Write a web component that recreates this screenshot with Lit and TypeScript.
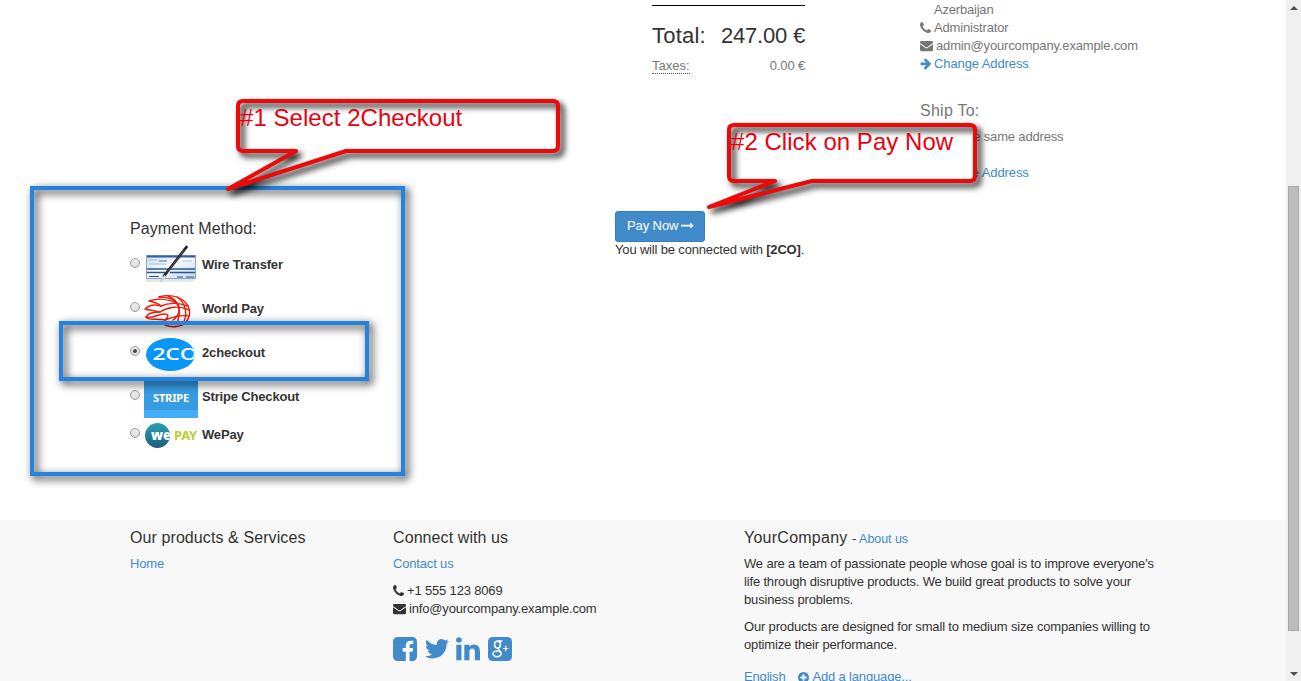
import { LitElement, html, css, svg } from "lit";
import { customElement, property } from "lit/decorators.js";

const ICONS: Record<string, { box: string; w: number; d: string }> = {
  phone: { box: "192 128 1408 1536", w: 11, d: "M1600 1240q0 27-10 70.5t-21 68.5q-21 50-122 106-94 51-186 51-27 0-53-3.5t-57.5-12.5-47-14.5-55.5-20.5-49-18q-98-35-175-83-127-79-264-216t-216-264q-48-77-83-175-3-9-18-49t-20.5-55.5-14.5-47-12.5-57.5-3.5-53q0-92 51-186 56-101 106-122 25-11 68.5-21t70.5-10q14 0 21 3 18 6 53 76 11 19 30 54t35 63.5 31 53.5q3 4 17.5 25t21.5 35.5 7 28.5q0 20-28.5 50t-62 55-62 53-28.5 46q0 9 5 22.5t8.5 20.5 14 24 11.5 19q76 137 174 235t235 174q2 1 19 11.5t24 14 20.5 8.5 22.5 5q18 0 46-28.5t53-62 55-62 50-28.5q14 0 28.5 7t35.5 21.5 25 17.5q25 15 53.5 31t63.5 35 54 30q70 35 76 53 3 7 3 21z" },
  envelope: { box: "0 128 1792 1536", w: 13, d: "M1792 710v794q0 66-47 113t-113 47h-1472q-66 0-113-47t-47-113v-794q44 49 101 87 362 246 497 345 57 42 92.5 65.5t94.5 48 110 24.5h2q51 0 110-24.5t94.5-48 92.5-65.5q170-123 498-345 57-39 100-87zm0-294q0 79-49 151t-122 123q-376 261-468 325-10 7-42.5 31t-54 38.5-52 32.5-57.5 27-50 9h-2q-23 0-50-9t-57.5-27-52-32.5-54-38.5-42.5-31q-91-64-262-182.5t-205-142.5q-62-42-117-115.5t-55-136.5q0-78 41.5-130t118.5-52h1472q65 0 112.5 47t47.5 113z" },
  arrow: { box: "64 128 1536 1664", w: 11, d: "M1600 960q0 54-37 91l-651 651q-39 37-91 37-51 0-90-37l-75-75q-38-38-38-91t38-91l293-293h-704q-52 0-84.5-37.5t-32.5-90.5v-128q0-53 32.5-90.5t84.5-37.5h704l-293-294q-38-36-38-90t38-90l75-75q38-38 90-38 53 0 91 38l651 651q37 35 37 90z" },
  longArrow: { box: "0 128 1792 1536", w: 13, d: "M1728 893q0 14-10 24l-384 354q-16 14-35 6-19-9-19-29v-224h-1248q-14 0-23-9t-9-23v-192q0-14 9-23t23-9h1248v-224q0-21 19-29t35 5l384 350q10 10 10 23z" },
  plus: { box: "128 128 1536 1536", w: 11, d: "M1344 960v-128q0-26-19-45t-45-19h-256v-256q0-26-19-45t-45-19h-128q-26 0-45 19t-19 45v256h-256q-26 0-45 19t-19 45v128q0 26 19 45t45 19h256v256q0 26 19 45t45 19h128q26 0 45-19t19-45v-256h256q26 0 45-19t19-45zm320-64q0 209-103 385.5t-279.5 279.5-385.5 103-385.5-103-279.5-279.5-103-385.5 103-385.5 279.5-279.5 385.5-103 385.5 103 279.5 279.5 103 385.5z" },
  facebook: { box: "128 128 1536 1536", w: 24, d: "M1376 128q119 0 203.5 84.5t84.5 203.5v960q0 119-84.5 203.5t-203.5 84.5h-188v-595h199l30-232h-229v-148q0-56 23.5-84t91.5-28l122-1v-207q-63-9-178-9-136 0-217.5 80t-81.5 226v171h-200v232h200v595h-532q-119 0-203.5-84.5t-84.5-203.5v-960q0-119 84.5-203.5t203.5-84.5h960z" },
  twitter: { box: "108 128 1576 1536", w: 24, d: "M1684 408q-67 98-162 167 1 14 1 42 0 130-38 259.500t-115.500 248.500-184.500 210.500-258 146-323 54.500q-271 0-496-145 35 4 78 4 225 0 401-138-105-2-188-64.500t-114-159.500q33 5 61 5 43 0 85-11-112-23-185.500-111.500t-73.500-205.500v-4q68 38 146 41-66-44-105-115t-39-154q0-88 44-163 121 149 294.500 238.500t371.500 99.500q-8-38-8-74 0-134 94.500-228.500t228.500-94.500q140 0 236 102 109-21 205-78-37 115-142 178 93-10 186-50z" },
  linkedin: { box: "128 128 1536 1536", w: 24, d: "M477 625v991h-330v-991h330zm21-306q1 73-50.500 122t-135.500 49h-2q-82 0-132-49t-50-122q0-74 51.500-122.500t134.500-48.500 133 48.500 51 122.500zm1166 729v568h-329v-530q0-105-40.500-164.500t-126.500-59.500q-63 0-105.500 34.500t-63.500 85.500q-11 30-11 81v553h-329q2-399 2-647t-1-296l-1-48h329v144h-2q20-32 41-56t56.500-52 87-43.500 114.500-15.500q171 0 275 113.500t104 332.500z" },
};

@customElement("ui-icon")
class UiIcon extends LitElement {
  @property() name = "phone";
  static styles = css`
    :host { display: inline-block; line-height: 0; }
    svg { display: block; fill: currentColor; }
  `;
  render() {
    const i = ICONS[this.name];
    const [, , bw, bh] = i.box.split(" ").map(Number);
    return html`<svg width=${i.w} height=${(i.w * bh) / bw} viewBox=${i.box}><path d=${i.d}></path></svg>`;
  }
}

@customElement("call-out")
class CallOut extends LitElement {
  @property() label = "";
  @property() shape = "";
  @property({ type: Number }) w = 0;
  @property({ type: Number }) h = 0;
  @property({ type: Number }) tx = 0;
  static styles = css`
    :host { display: block; }
    svg { display: block; overflow: visible; }
    .fill { fill: #fff; }
    .line { fill: none; stroke: #ee0808; stroke-width: 4; stroke-linejoin: round; filter: drop-shadow(4px 4px 3px #000); }
    text { font: 24px "Liberation Sans", Arial, sans-serif; letter-spacing: 0.04px; fill: #e90010; }
  `;
  render() {
    return html`<svg width=${this.w} height=${this.h}>
      <path class="fill" d=${this.shape}></path>
      <path class="line" d=${this.shape}></path>
      <text x=${this.tx} y="27">${this.label}</text>
    </svg>`;
  }
}

const wireLogo = svg`
  <defs><linearGradient id="chk" x1="0" y1="0" x2="1" y2="1"><stop offset="0" stop-color="#c5d8ef"/><stop offset=".45" stop-color="#fafcff"/><stop offset="1" stop-color="#c2d5ea"/></linearGradient></defs>
  <path d="M1 37h46l6-4H3z" fill="#e2e6ea"/>
  <rect x="2.500" y="10.500" width="49" height="23" fill="url(#chk)" stroke="#8aa5cb"/>
  <path d="M3 11.500h48" stroke="#315f9f" stroke-width="2.200"/>
  <path d="M15 16h8" stroke="#456fa8"/>
  <path d="M5 19h18M5 15h9M38 16h10" stroke="#a9c0dc"/>
  <path d="M3 24h48M3 27.500h18M26 27.500h25" stroke="#285495" stroke-width="1.400"/>
  <path d="M5 31.500h10M33 32h6M42 32h8" stroke="#285495"/>
  <path d="M42.500 2 20 31" stroke="#1c1c1e" stroke-width="2.700" stroke-linecap="round"/>
  <path d="M40.500 4.500 23 27.500" stroke="#8a8f94" stroke-width=".6"/>
  <path d="m20.500 30-4.500 7 6-4.500z" fill="#e9edf0" stroke="#a4b2bf" stroke-width=".5"/>`;

const worldLogo = svg`
  <g fill="none" stroke="#ec1c0b" stroke-width="1.400" stroke-linecap="round" stroke-linejoin="round">
    <path d="M15 4C24 1 35 3 41 9c6 6 6 14 1 20-4 5-14 6-21 3"/>
    <path d="M15 4c7 0 15 2 18 6-9-4-20-5-28-2 5 1 9 2 12 5"/>
    <path d="M17 13C11 11 4 12 1 16c4 1 11 2 15 3 8-5 19-7 29-2"/>
    <path d="M16 19c-6 0-12 1-14 5 6 2 12-3 18-3s4 3 1 6c10-4 18-5 24-4"/>
    <path d="M2 24c2 4 12 1 19 3"/>
    <path d="M17 13c7-3 18-4 26 0"/>
    <path d="M24 3c10 4 15 14 8 29M33 4c9 6 11 17 6 27"/>
    <path d="M33 10c4 5 3 12-4 17"/>
  </g>`;

const twocoLogo = svg`
  <defs><clipPath id="el"><ellipse cx="26.500" cy="18.500" rx="24.500" ry="16.500"/></clipPath></defs>
  <ellipse cx="26.500" cy="18.500" rx="24.500" ry="16.500" fill="#0a96f8"/>
  <g clip-path="url(#el)"><text x="8.500" y="23.500" textLength="45" lengthAdjust="spacingAndGlyphs" font-family="Open Sans" font-weight="600" font-size="15.500" fill="#fff">2CO</text></g>`;

const stripeLogo = svg`
  <rect width="54" height="38" fill="#379ce4"/>
  <rect y="30" width="54" height="8" fill="#45adf8"/>
  <text x="9" y="22" textLength="36" lengthAdjust="spacingAndGlyphs" font-family="Noto Sans" font-weight="700" font-size="11" fill="#fff">STRIPE</text>`;

const wepayLogo = svg`
  <defs>
    <linearGradient id="wp" x1="0" y1="0" x2="0" y2="1"><stop offset="0" stop-color="#2ba0b4"/><stop offset="1" stop-color="#1c5c7d"/></linearGradient>
    <clipPath id="wc"><circle cx="13.500" cy="12.500" r="12.500"/></clipPath>
  </defs>
  <circle cx="13.500" cy="12.500" r="12.500" fill="url(#wp)"/>
  <g clip-path="url(#wc)"><text x="7" y="17" textLength="20" lengthAdjust="spacingAndGlyphs" font-family="Noto Sans" font-weight="900" font-size="14.500" fill="#fff">we</text></g>
  <text x="30" y="17" textLength="23" lengthAdjust="spacingAndGlyphs" font-family="Noto Sans" font-weight="700" font-size="11.500" fill="#b9cf35">PAY</text>`;

const METHODS = [
  { name: "Wire Transfer", art: wireLogo, h: 38, cls: "" },
  { name: "World Pay", art: worldLogo, h: 34, cls: "low" },
  { name: "2checkout", art: twocoLogo, h: 37, cls: "low" },
  { name: "Stripe Checkout", art: stripeLogo, h: 38, cls: "end" },
  { name: "WePay", art: wepayLogo, h: 25, cls: "last" },
];

@customElement("app-root")
class AppRoot extends LitElement {
  static styles = css`
    :host { display: block; width: 1301px; height: 681px; overflow: hidden; position: relative; background: #fff; color: #333; font: 13px/18px "Liberation Sans", Arial, sans-serif; letter-spacing: -0.165px; }
    * { box-sizing: border-box; }
    .page { display: flex; height: 681px; }
    .view { flex: 1; display: flex; flex-direction: column; min-width: 0; }
    a { color: #428bca; }
    p { margin: 0 0 9px; }
    h4 { margin: 0; font-size: 16px; font-weight: 400; line-height: 18px; letter-spacing: 0.09px; }
    main { height: 520px; flex: none; display: grid; grid-template-columns: 485px 305px 1fr; padding-left: 130px; }
    .methods { padding-top: 220px; }
    .row { height: 44px; display: flex; align-items: center; font-weight: 700; }
    .name { padding-top: 2px; }
    .methods h4 { margin-bottom: 4px; }
    .row.last { height: 32px; }
    .radio { width: 10px; height: 10px; border-radius: 50%; border: 1px solid #999; background: linear-gradient(#eee, #ddd); margin: -2px 4px 0 0; display: grid; place-items: center; }
    .radio.on::after { content: ""; width: 4px; height: 4px; border-radius: 50%; background: #444; }
    .logo { width: 54px; display: block; margin-right: 4px; overflow: visible; }
    .low .logo { margin-top: 4px; }
    .last .logo { margin-top: 3px; }
    .end .logo { align-self: flex-end; }
    .totals { width: 153px; margin-left: 37px; border-top: 1px solid #000; height: 206px; }
    .middle { padding-top: 5px; }
    .line { display: flex; justify-content: space-between; }
    .total { font-size: 22px; line-height: 24px; padding-top: 18px; letter-spacing: 0.2px; }
    .amount { letter-spacing: -0.2px; }
    .tax { color: #777; padding-top: 9px; }
    .tax .under { border-bottom: 1px dotted #555; height: 17px; letter-spacing: 0; }
    .btn { display: inline-flex; align-items: center; gap: 3px; width: 90px; height: 31px; padding: 0 0 2px 11px; border: 1px solid #357ebd; border-radius: 3px; background: #428bca; color: #fff; font: inherit; letter-spacing: -0.1px; }
    .note { margin-top: -1px; }
    .side { color: #777; padding-top: 1px; }
    .side .item { height: 18px; display: flex; align-items: center; gap: 3px; }
    .side a.item { letter-spacing: -0.1px; }
    .side .item.indent { padding-left: 14px; letter-spacing: -0.2px; }
    .ship { padding-top: 29px; }
    .ship h4 { letter-spacing: 0.25px; }
    .ship .item { margin-top: 8px; }
    .ship .item + .item { margin-top: 18px; }
    footer { flex: 1; background: #f8f8f8; display: grid; grid-template-columns: 263px 351px 1fr; padding: 9px 0 0 130px; }
    footer h4 { margin-bottom: 8px; }
    footer small { font-size: 12.5px; line-height: 0; letter-spacing: -0.05px; }
    .item { display: flex; align-items: center; gap: 3px; }
    .social { display: flex; align-items: center; gap: 7.6px; color: #428bca; margin-top: 19px; }
    .about { width: 424px; }
    .about h4 { height: 18px; letter-spacing: 0.25px; }
    .langs { display: flex; gap: 13px; color: #428bca; margin-top: 14px; white-space: nowrap; }
    .bar { width: 15px; background: #f0f0f0; display: flex; flex-direction: column; align-items: center; }
    .thumb { width: 11px; height: 445px; margin-top: 173px; background: #bcbcbc; border: 1px solid #a8a8a8; }
    .up, .down { border: 4px solid transparent; width: 0; }
    .up { border-top: 0; border-bottom-color: #505050; margin-top: 6px; margin-bottom: 3px; }
    .down { border-bottom: 0; border-top-color: #505050; margin-top: 41px; }
    .mark { position: absolute; border: 4px solid #2583e0; filter: drop-shadow(3px 3px 4px rgba(0, 0, 0, 0.9)); }
    .outer { left: 30px; top: 186px; width: 375px; height: 290px; }
    .inner { left: 59px; top: 321px; width: 310px; height: 60px; }
    .one { position: absolute; left: 236px; top: 99px; }
    .two { position: absolute; left: 727px; top: 123px; }
  `;

  render() {
    return html`
      <div class="page">
        <div class="view">
          <main>
            <section class="methods">
              <h4>Payment Method:</h4>
              ${METHODS.map((m) => html`<div class="row ${m.cls}">
                <span class="radio ${m.name === "2checkout" ? "on" : ""}"></span>
                <svg class="logo" width="54" height=${m.h}>${m.art}</svg>
                <span class="name">${m.name}</span>
              </div>`)}
            </section>
            <section class="middle">
              <div class="totals">
                <div class="line total"><span>Total:</span><span class="amount">247.00 €</span></div>
                <div class="line tax"><span class="under">Taxes:</span><span>0.00 €</span></div>
              </div>
              <button class="btn">Pay Now <ui-icon name="longArrow"></ui-icon></button>
              <div class="note">You will be connected with <b>[2CO]</b>.</div>
            </section>
            <section class="side">
              <div class="item indent">Azerbaijan</div>
              <div class="item"><ui-icon name="phone"></ui-icon>Administrator</div>
              <div class="item"><ui-icon name="envelope"></ui-icon>admin@yourcompany.example.com</div>
              <a class="item"><ui-icon name="arrow"></ui-icon>Change Address</a>
              <div class="ship">
                <h4>Ship To:</h4>
                <div class="item">Ship to the same address</div>
                <a class="item"><ui-icon name="arrow"></ui-icon>Change Address</a>
              </div>
            </section>
          </main>
          <footer>
            <section><h4>Our products &amp; Services</h4><a>Home</a></section>
            <section>
              <h4>Connect with us</h4>
              <p><a>Contact us</a></p>
              <div class="item"><ui-icon name="phone"></ui-icon>+1 555 123 8069</div>
              <div class="item"><ui-icon name="envelope"></ui-icon>info@yourcompany.example.com</div>
              <div class="social">
                <ui-icon name="facebook"></ui-icon><ui-icon name="twitter"></ui-icon><ui-icon name="linkedin"></ui-icon>
                <svg width="24" height="24"><rect width="24" height="24" rx="4.500" fill="#428bca"/>
                  <g fill="none" stroke="#fff">
                    <ellipse cx="9.500" cy="7.600" rx="2.900" ry="3.500" stroke-width="1.600"/>
                    <path d="M10 3.900h4.500M11.500 5l2-1M10.500 11c-1.500 1.500 2.500 2.600 2.700 5" stroke-width="1.300"/>
                    <ellipse cx="9" cy="16.800" rx="4" ry="2.900" stroke-width="1.500"/>
                    <path d="M15 11.500h5.400M17.700 8.800v5.400" stroke-width="1.200"/>
                  </g></svg>
              </div>
            </section>
            <section class="about">
              <h4>YourCompany <small>- <a>About us</a></small></h4>
              <p>We are a team of passionate people whose goal is to improve everyone's life through disruptive products. We build great products to solve your business problems.</p>
              <p>Our products are designed for small to medium size companies willing to optimize their performance.</p>
              <div class="langs"><span>English</span><span class="item"><ui-icon name="plus"></ui-icon>Add a language...</span></div>
            </section>
          </footer>
        </div>
        <div class="bar"><span class="up"></span><span class="thumb"></span><span class="down"></span></div>
      </div>
      <div class="mark outer"></div>
      <div class="mark inner"></div>
      <call-out class="one" w="324" h="92" tx="4" label="#1 Select 2Checkout"
        shape="M7 2H317Q322 2 322 7V47Q322 52 317 52H110L-8 90L60 52H7Q2 52 2 47V7Q2 2 7 2Z"></call-out>
      <call-out class="two" w="250" h="86" tx="4" label="#2 Click on Pay Now"
        shape="M7 2H243Q248 2 248 7V53Q248 58 243 58H85L-18 84L48 58H7Q2 58 2 53V7Q2 2 7 2Z"></call-out>
    `;
  }
}
